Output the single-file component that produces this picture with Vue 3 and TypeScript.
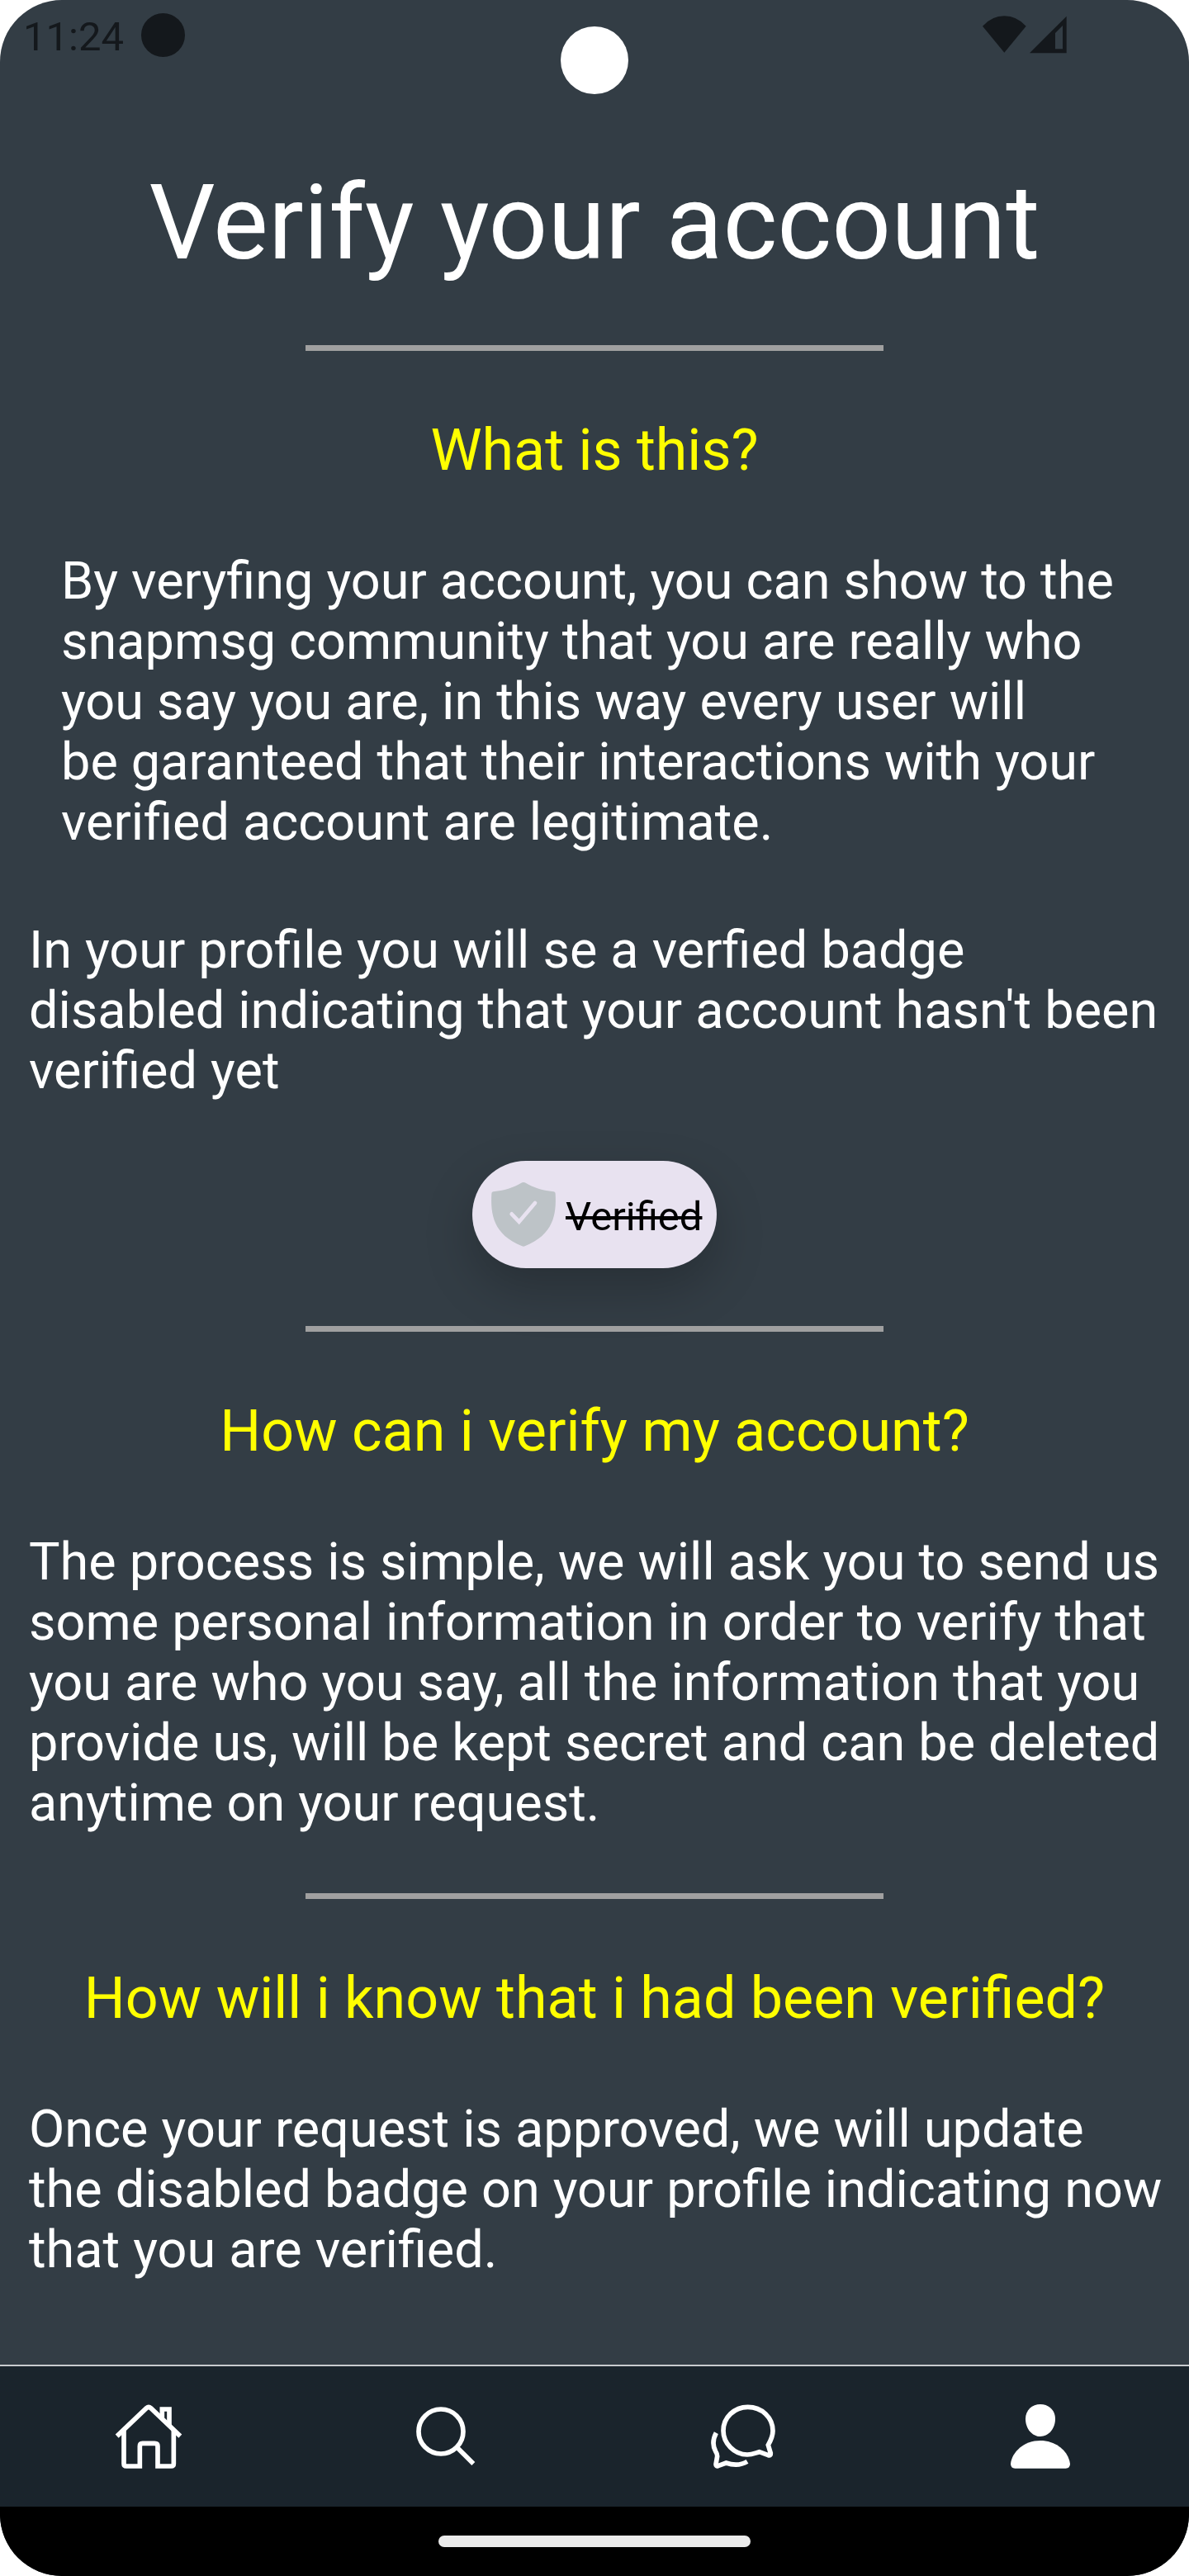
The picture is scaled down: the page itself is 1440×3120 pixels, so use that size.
<script setup lang="ts">
interface Section {
  title: string
  paragraphs: { text: string; inset?: boolean }[]
  badge?: boolean
}

const sections: Section[] = [
  {
    title: 'What is this?',
    paragraphs: [
      {
        text: 'By veryfing your account, you can show to the\nsnapmsg community that you are really who\nyou say you are, in this way every user will\nbe garanteed that their interactions with your\nverified account are legitimate.',
        inset: true,
      },
      {
        text: "In your profile you will se a verfied badge\ndisabled indicating that your account hasn't been\nverified yet",
      },
    ],
    badge: true,
  },
  {
    title: 'How can i verify my account?',
    paragraphs: [
      {
        text: 'The process is simple, we will ask you to send us\nsome personal information in order to verify that\nyou are who you say, all the information that you\nprovide us, will be kept secret and can be deleted\nanytime on your request.',
      },
    ],
  },
  {
    title: 'How will i know that i had been verified?',
    paragraphs: [
      {
        text: 'Once your request is approved, we will update\nthe disabled badge on your profile indicating now\nthat you are verified.',
      },
    ],
  },
]
</script>

<template>
  <div class="phone">
    <header class="status">
      <span class="time">11:24</span>
      <span class="dot"></span>
      <svg class="signals" viewBox="0 0 306 138" width="102" height="46">
        <path d="M0 38Q34 1 79 1T158 38L79 134Z" />
        <path fill-rule="evenodd" d="M171 135.500L305 2V135.500ZM264 63V121H291V36Z" />
      </svg>
      <span class="camera"></span>
    </header>

    <main class="content">
      <h1>Verify your account</h1>
      <section v-for="s in sections" :key="s.title">
        <hr />
        <h2>{{ s.title }}</h2>
        <p v-for="p in s.paragraphs" :key="p.text" :class="{ inset: p.inset }">{{ p.text }}</p>
        <div v-if="s.badge" class="badge">
          <svg viewBox="156 177 252 252" width="84" height="84">
            <path
              fill="#bdc3c7"
              d="M277 187Q282 185 287 187C321 206 345 215 392 220Q398 221 398 227C402 302 392 375 287 418Q282 420 277 418C172 375 162 302 166 227Q166 221 172 220C219 215 243 206 277 187Z"
            />
            <path d="M239 301L266 329L324 261" fill="none" stroke="#e8e2f0" stroke-width="14" stroke-linecap="round" />
          </svg>
          <span>Verified</span>
        </div>
      </section>
    </main>

    <nav class="tabs">
      <a>
        <svg viewBox="84 177 252 252" width="84" height="84" class="line">
          <path d="M95 302L202 200Q210 193 218 200L325 302" />
          <path d="M120 281V402Q120 411 129 411H178V338Q178 328 188 328H232Q243 328 243 338V411H292Q301 411 301 402V281" />
          <path d="M259 235V204H285V262" />
        </svg>
      </a>
      <a>
        <svg viewBox="54 57 252 252" width="84" height="84" class="line">
          <circle cx="162" cy="165" r="81" />
          <path d="M219 221L280 282" />
        </svg>
      </a>
      <a>
        <svg viewBox="54 57 252 252" width="84" height="84" class="line">
          <path d="M239 239C222 244 212 249 195 249C148 249 108 208 108 162C108 114 148 76 197 76C248 76 288 114 288 163C288 182 281 197 271 214L280 244Q281 254 271 251Z" />
          <path d="M82 170C70 193 69 217 80 237Q86 246 86 255L81 284Q81 292 89 290L118 279C145 288 173 287 195 274" />
        </svg>
      </a>
      <a>
        <svg viewBox="54 57 252 252" width="84" height="84">
          <path d="M180 66C210 66 234 87 234 119C234 153 211 183 180 183S126 153 126 119C126 87 150 66 180 66Z" />
          <path d="M180 198C239 198 283 239 288 282Q288 299 272 299H88Q72 299 72 282C77 239 121 198 180 198Z" />
        </svg>
      </a>
    </nav>
    <footer class="gesture"><span></span></footer>
  </div>
</template>

<style>
body {
  background: #fff;
}
</style>

<style scoped>
.phone {
  width: 1440px;
  height: 3120px;
  display: flex;
  flex-direction: column;
  background: #333d45;
  border-radius: 75px;
  overflow: hidden;
  font-family: Roboto, sans-serif;
  color: #fff;
}
.status {
  position: relative;
  height: 196px;
  flex: none;
  box-sizing: border-box;
  padding: 16px 148px 0 28px;
  display: flex;
  align-items: flex-start;
  color: #14181c;
}
.time {
  font-size: 49px;
  line-height: 57px;
  width: 143px;
}
.dot {
  width: 53px;
  height: 53px;
  border-radius: 50%;
  background: #14181c;
}
.signals {
  margin: 2.5px 0 0 auto;
  fill: #14181c;
}
.camera {
  position: absolute;
  left: 679px;
  top: 32px;
  width: 82px;
  height: 82px;
  border-radius: 50%;
  background: #fff;
}
.content {
  flex: 1;
  min-height: 0;
}
h1 {
  margin: 0 0 74px;
  font-size: 126px;
  line-height: 148px;
  font-weight: 400;
  text-align: center;
}
hr {
  width: 700px;
  height: 7px;
  border: 0;
  margin: 0 auto 79px;
  background: #a0a0a0;
}
h2 {
  margin: 0 0 81px;
  font-size: 70px;
  line-height: 82px;
  font-weight: 400;
  text-align: center;
  color: #ff0;
}
p {
  margin: 0 35px 73px;
  font-size: 63px;
  line-height: 73px;
  word-spacing: 0.4px;
  white-space: pre;
}
p.inset {
  margin: 0 74px 82px;
}
.badge {
  box-sizing: border-box;
  width: 296px;
  height: 130px;
  margin: 0 auto 70px;
  padding-left: 20px;
  display: flex;
  align-items: center;
  gap: 9px;
  border-radius: 65px;
  background: #e8e2f0;
  box-shadow: 0 24px 60px rgba(0, 0, 0, 0.22);
  color: #000;
}
.badge span {
  font-size: 49px;
  line-height: 57px;
  padding-top: 5px;
  text-decoration: line-through;
}
.tabs {
  flex: none;
  height: 170px;
  border-top: 2px solid #c8cbce;
  display: flex;
  background: #1a242c;
}
.tabs a {
  flex: 1;
  display: flex;
  align-items: center;
  justify-content: center;
}
.tabs svg {
  fill: #fff;
}
.tabs svg.line {
  fill: none;
  stroke: #fff;
  stroke-width: 17px;
}
.gesture {
  flex: none;
  height: 84px;
  box-sizing: border-box;
  padding-top: 35px;
  background: #000;
}
.gesture span {
  display: block;
  width: 378px;
  height: 14px;
  margin: 0 auto;
  border-radius: 7px;
  background: #ebebeb;
}
</style>
